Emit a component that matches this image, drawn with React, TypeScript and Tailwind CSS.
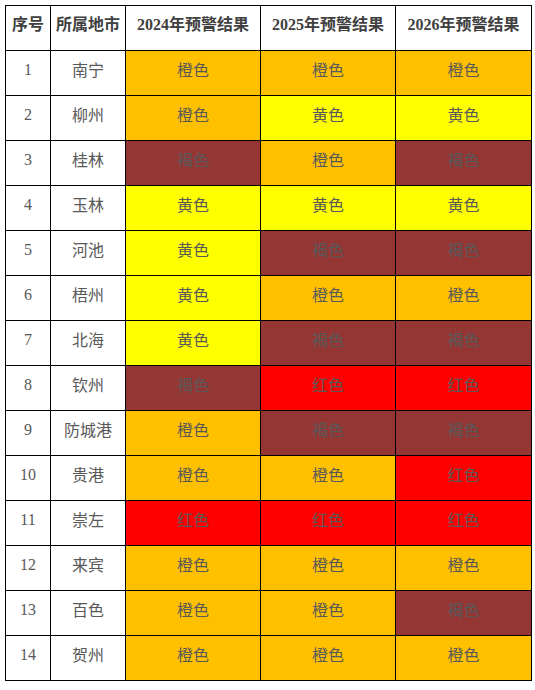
const COLORS: Record<string, string> = {
  橙色: "bg-[#ffc000]",
  黄色: "bg-[#ffff00]",
  褐色: "bg-[#943634]",
  红色: "bg-[#ff0000]",
};

const rows: [string, string, string, string][] = [
  ["南宁", "橙色", "橙色", "橙色"],
  ["柳州", "橙色", "黄色", "黄色"],
  ["桂林", "褐色", "橙色", "褐色"],
  ["玉林", "黄色", "黄色", "黄色"],
  ["河池", "黄色", "褐色", "褐色"],
  ["梧州", "黄色", "橙色", "橙色"],
  ["北海", "黄色", "褐色", "褐色"],
  ["钦州", "褐色", "红色", "红色"],
  ["防城港", "橙色", "褐色", "褐色"],
  ["贵港", "橙色", "橙色", "红色"],
  ["崇左", "红色", "红色", "红色"],
  ["来宾", "橙色", "橙色", "橙色"],
  ["百色", "橙色", "橙色", "褐色"],
  ["贺州", "橙色", "橙色", "橙色"],
];

const cell = "border border-black text-center align-middle leading-[20px] px-0 pt-0";
const cjk = "font-['Noto_Sans_CJK_SC',sans-serif] pb-[9px]";

export default function App() {
  return (
    <div className="bg-white w-[535px] h-[690px] pt-[5px] pl-[5px]">
      <table className="table-fixed border-collapse w-[526px] text-[16px] text-[#595959] font-['Liberation_Serif','Noto_Sans_CJK_SC',serif]">
        <colgroup>
          <col className="w-[45px]" />
          <col className="w-[75px]" />
          <col className="w-[135px]" />
          <col className="w-[135px]" />
          <col className="w-[136px]" />
        </colgroup>
        <thead>
          <tr className="h-[45px] font-bold text-[#404040]">
            <th className={`${cell} pb-[6px]`}>序号</th>
            <th className={`${cell} pb-[6px]`}>所属地市</th>
            <th className={`${cell} pb-[6px]`}>2024年预警结果</th>
            <th className={`${cell} pb-[6px]`}>2025年预警结果</th>
            <th className={`${cell} pb-[6px]`}>2026年预警结果</th>
          </tr>
        </thead>
        <tbody>
          {rows.map((r, i) => (
            <tr key={r[0]} className="h-[45px]">
              <td className={`${cell} pb-[6px]`}>{i + 1}</td>
              <td className={`${cell} ${cjk}`}>{r[0]}</td>
              {r.slice(1).map((c, j) => (
                <td key={j} className={`${cell} ${cjk} ${COLORS[c]}`}>
                  {c}
                </td>
              ))}
            </tr>
          ))}
        </tbody>
      </table>
    </div>
  );
}
